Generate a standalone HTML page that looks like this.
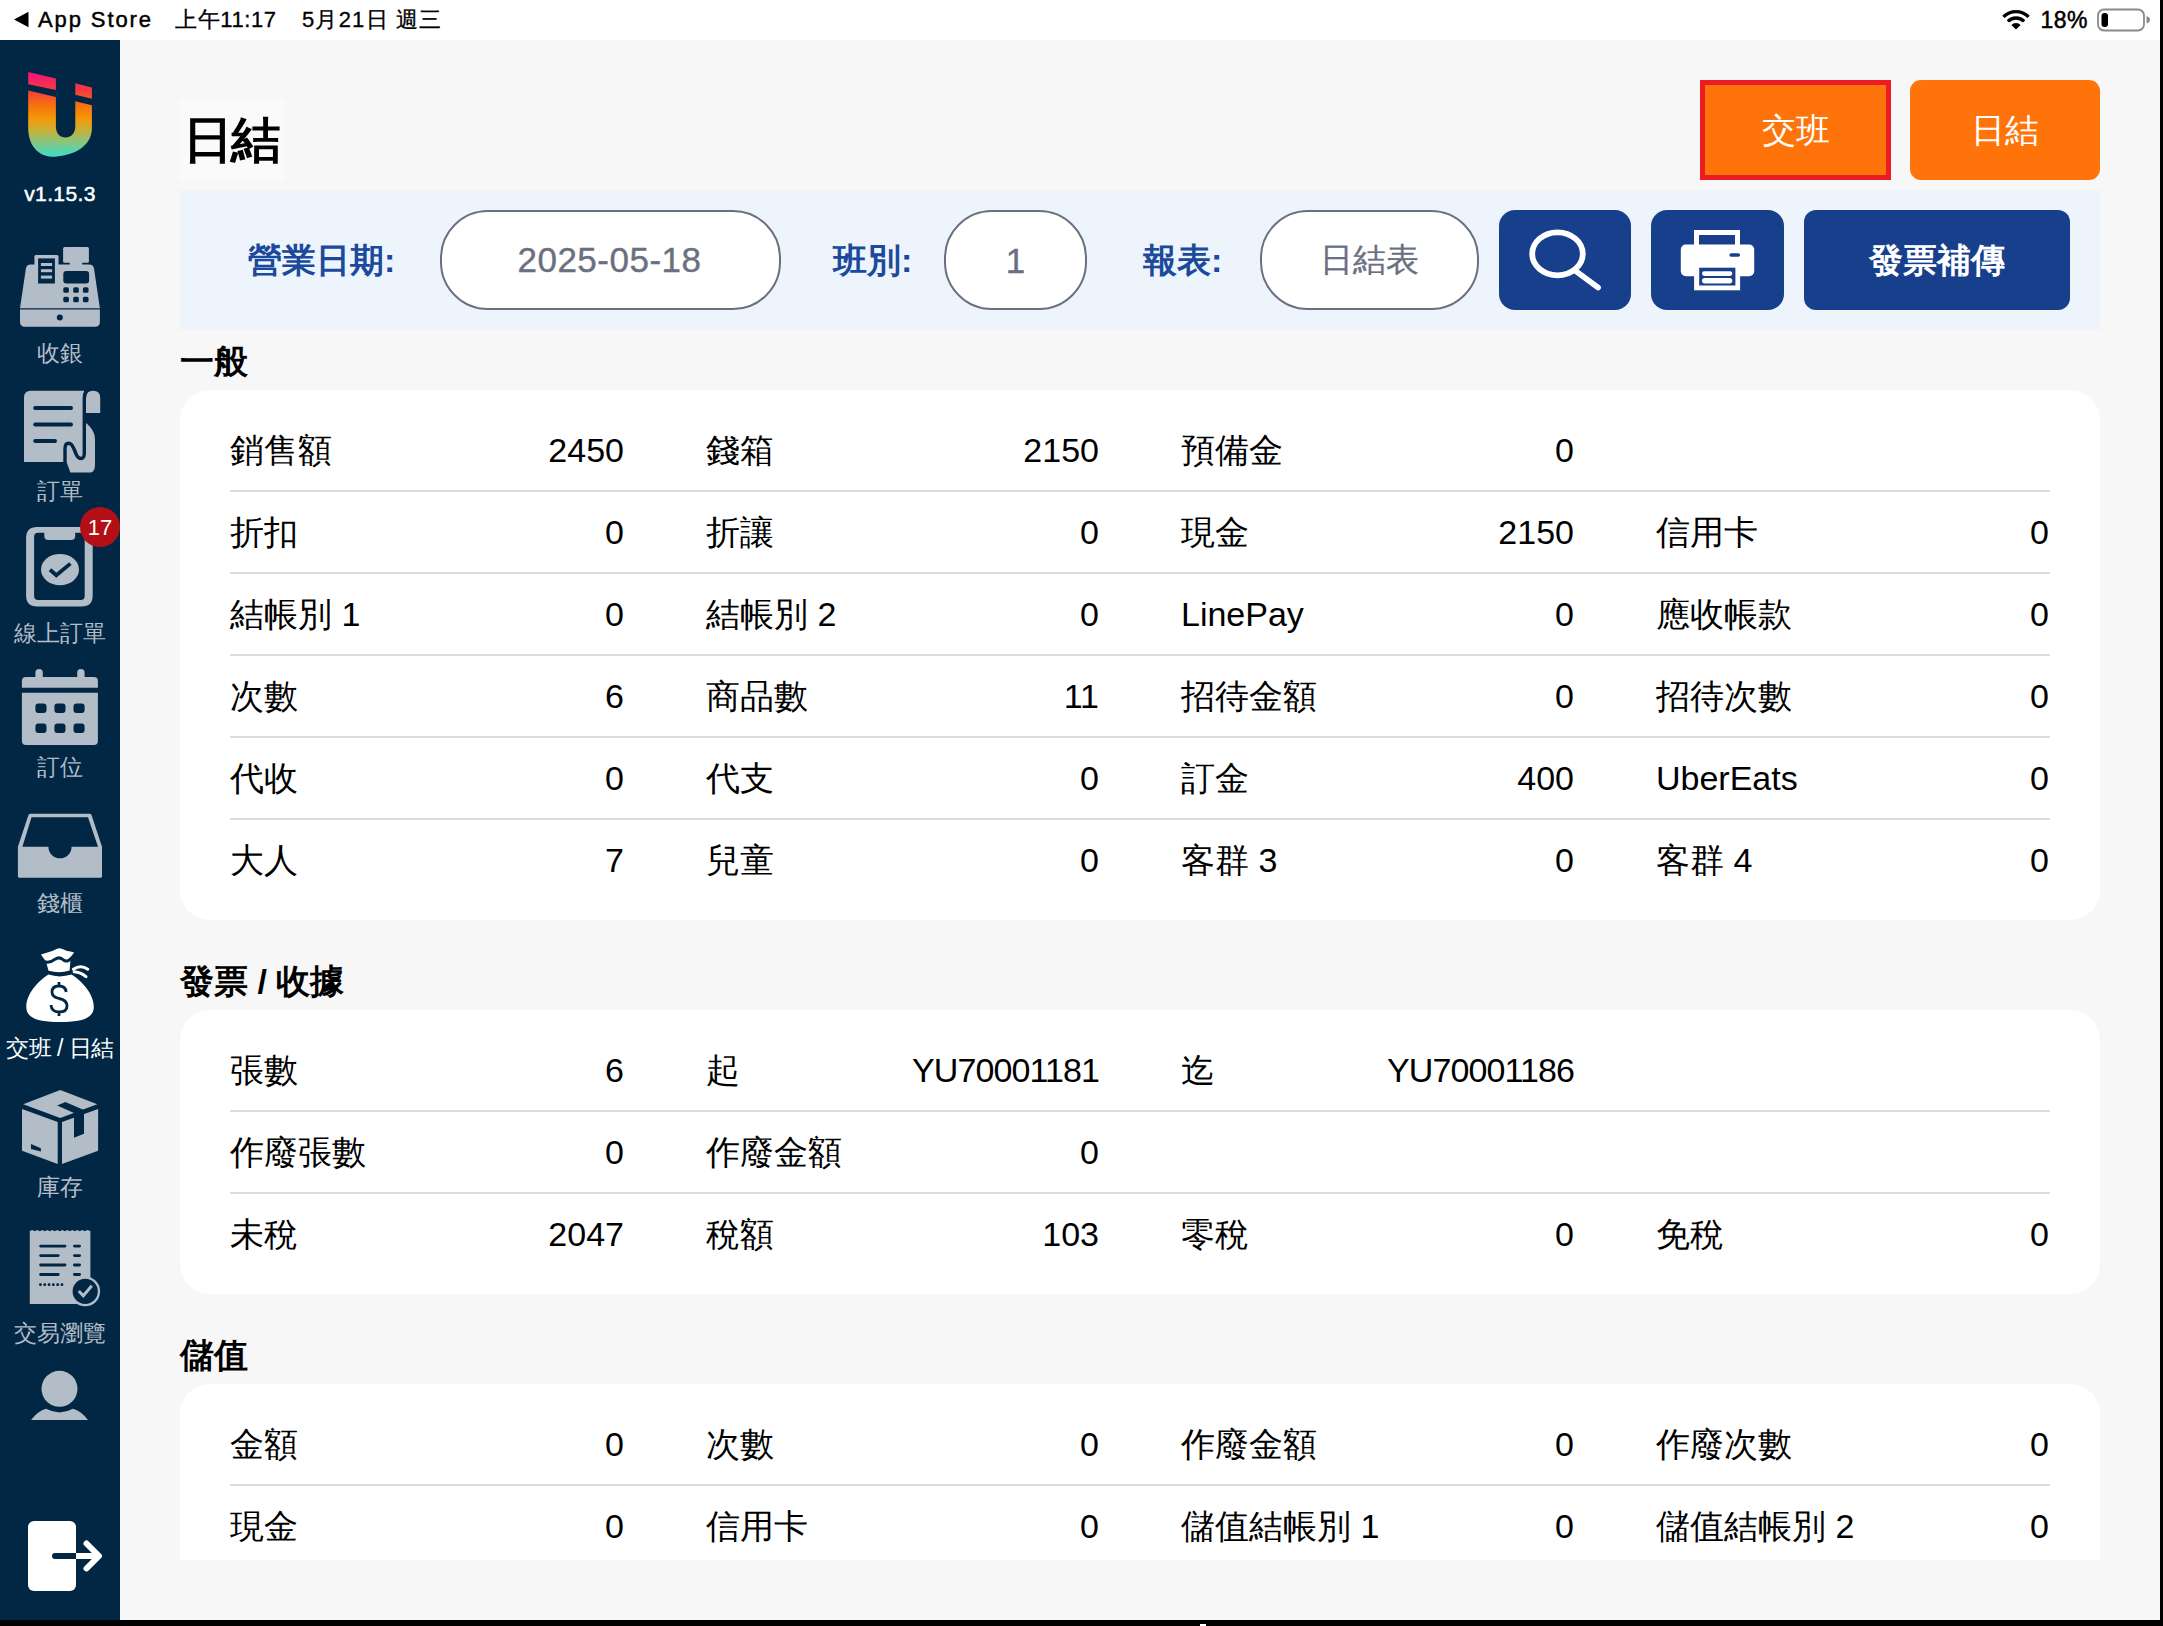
<!DOCTYPE html>
<html><head><meta charset="utf-8"><title>日結</title>
<style>
html,body{margin:0;padding:0;}
body{width:2163px;height:1626px;overflow:hidden;background:#f7f7f7;font-family:"Liberation Sans", sans-serif;position:relative;}
.t{position:absolute;white-space:nowrap;}
.b{position:absolute;box-sizing:border-box;}
svg{position:absolute;}
</style></head><body>

<div class="b" style="left:0px;top:0px;width:2163px;height:40px;background:#ffffff;"></div>
<div class="b" style="left:0px;top:40px;width:120px;height:1580px;background:#012745;"></div>
<div class="b" style="left:2160px;top:0px;width:3px;height:1626px;background:#000;"></div>
<div class="b" style="left:0px;top:1620px;width:2163px;height:6px;background:#000;"></div>
<div class="b" style="left:1200px;top:1624px;width:6px;height:2px;background:#fff;"></div>
<svg style="left:0;top:0" width="40" height="40"><polygon points="14,19.5 28.5,11.7 28.5,27.3" fill="#000"/></svg>
<div class="t" style="left:38px;top:5.0px;font-size:22px;line-height:30px;color:#000;font-weight:normal;letter-spacing:1.9px;-webkit-text-stroke:0.45px #000;">App Store</div>
<div class="t" style="left:175px;top:5.0px;font-size:22px;line-height:30px;color:#000;font-weight:normal;letter-spacing:0.6px;-webkit-text-stroke:0.3px #000;">上午11:17</div>
<div class="t" style="left:302px;top:5.0px;font-size:22px;line-height:30px;color:#000;font-weight:normal;letter-spacing:1.2px;-webkit-text-stroke:0.3px #000;">5月21日 週三</div>
<div class="t" style="right:75px;top:4.0px;font-size:23px;line-height:32px;color:#000;font-weight:normal;letter-spacing:0.5px;-webkit-text-stroke:0.5px #000;">18%</div>
<svg style="left:1995px;top:0" width="168" height="40" viewBox="1995 0 168 40">
<path d="M2016,29.5 L2011.4,24.9 A6.5,6.5 0 0 1 2020.6,24.9 Z" fill="#000"/>
<path d="M2007.9,21.4 A11.5,11.5 0 0 1 2024.1,21.4" stroke="#000" stroke-width="3.4" fill="none"/>
<path d="M2003.4,16.9 A17.8,17.8 0 0 1 2028.6,16.9" stroke="#000" stroke-width="3.4" fill="none"/>
<rect x="2098" y="9.5" width="46" height="21" rx="6" fill="none" stroke="#8a8a8a" stroke-width="1.8"/>
<rect x="2101.5" y="13" width="6.5" height="14" rx="3" fill="#000"/>
<path d="M2146.5,16.2 Q2150,17 2150,19.8 Q2150,22.6 2146.5,23.4 Z" fill="#8a8a8a"/>
</svg>
<div class="b" style="left:180px;top:100px;width:104px;height:80px;background:#fafafa;"></div>
<div class="t" style="left:182.5px;top:105.0px;font-size:50px;line-height:70px;color:#000;font-weight:bold;letter-spacing:-1.5px;">日結</div>
<div class="b" style="left:1700px;top:80px;width:191px;height:100px;background:#ff740a;border:5px solid #ec1c24;"></div>
<div class="t" style="left:1700.0px;width:191px;text-align:center;top:106.5px;font-size:34px;line-height:47px;color:#fff;font-weight:normal;">交班</div>
<div class="b" style="left:1910px;top:80px;width:190px;height:100px;background:#ff740a;border-radius:11px;"></div>
<div class="t" style="left:1910.0px;width:190px;text-align:center;top:106.5px;font-size:34px;line-height:47px;color:#fff;font-weight:normal;">日結</div>
<div class="b" style="left:180px;top:190px;width:1920px;height:140px;background:#edf4fc;"></div>
<div class="t" style="left:248px;top:236.5px;font-size:34px;line-height:47px;color:#1b4a9c;font-weight:bold;">營業日期:</div>
<div class="b" style="left:440px;top:210px;width:341px;height:100px;background:#fff;border:2px solid #6b7080;border-radius:48px;"></div>
<div class="t" style="left:459.5px;width:300px;text-align:center;top:235.0px;font-size:35px;line-height:49px;color:#6b7080;font-weight:normal;letter-spacing:0.5px;-webkit-text-stroke:0.4px #6b7080;">2025-05-18</div>
<div class="t" style="left:833px;top:236.5px;font-size:34px;line-height:47px;color:#1b4a9c;font-weight:bold;">班別:</div>
<div class="b" style="left:944px;top:210px;width:143px;height:100px;background:#fff;border:2px solid #6b7080;border-radius:48px;"></div>
<div class="t" style="left:965.5px;width:100px;text-align:center;top:235.5px;font-size:35px;line-height:49px;color:#6b7080;font-weight:normal;-webkit-text-stroke:0.4px #6b7080;">1</div>
<div class="t" style="left:1143px;top:236.5px;font-size:34px;line-height:47px;color:#1b4a9c;font-weight:bold;">報表:</div>
<div class="b" style="left:1260px;top:210px;width:219px;height:100px;background:#fff;border:2px solid #6b7080;border-radius:48px;"></div>
<div class="t" style="left:1269.5px;width:200px;text-align:center;top:237.0px;font-size:33px;line-height:46px;color:#6b7080;font-weight:normal;-webkit-text-stroke:0.3px #6b7080;">日結表</div>
<div class="b" style="left:1499px;top:210px;width:132px;height:100px;background:#173f8c;border-radius:16px;"></div>
<div class="b" style="left:1651px;top:210px;width:133px;height:100px;background:#173f8c;border-radius:16px;"></div>
<div class="b" style="left:1804px;top:210px;width:266px;height:100px;background:#173f8c;border-radius:12px;"></div>
<div class="t" style="left:1804.0px;width:266px;text-align:center;top:236.5px;font-size:34px;line-height:47px;color:#fff;font-weight:bold;">發票補傳</div>
<svg style="left:1499px;top:210px" width="132" height="100" viewBox="1499 210 132 100">
<ellipse cx="1557.5" cy="253.8" rx="25.3" ry="21.5" fill="none" stroke="#fff" stroke-width="5.8"/>
<line x1="1577" y1="272" x2="1598" y2="287.5" stroke="#fff" stroke-width="5.8" stroke-linecap="round"/>
</svg>
<svg style="left:1651px;top:210px" width="133" height="100" viewBox="1651 210 133 100">
<rect x="1696.5" y="232.5" width="41" height="16" fill="none" stroke="#fff" stroke-width="5"/>
<rect x="1680.8" y="244.6" width="73.4" height="31.6" rx="5" fill="#fff"/>
<rect x="1729.4" y="253.2" width="10.7" height="3.6" rx="1.8" fill="#173f8c"/>
<rect x="1694.1" y="267.7" width="46" height="22.6" fill="#fff"/>
<rect x="1699.2" y="267.7" width="36.2" height="17.8" fill="#173f8c"/>
<rect x="1702" y="271.2" width="30.3" height="4.7" rx="2.35" fill="#fff"/>
<rect x="1702" y="278" width="30.3" height="5.4" rx="2.7" fill="#fff"/>
</svg>
<div class="t" style="left:180px;top:337.5px;font-size:34px;line-height:47px;color:#000;font-weight:bold;">一般</div>
<div class="b" style="left:180px;top:390px;width:1920px;height:530px;background:#fff;border-radius:30px 30px 30px 30px;"></div>
<div class="t" style="left:230px;top:426.5px;font-size:34px;line-height:47px;color:#000;font-weight:normal;">銷售額</div>
<div class="t" style="right:1539px;top:426.5px;font-size:34px;line-height:47px;color:#000;font-weight:normal;">2450</div>
<div class="t" style="left:706px;top:426.5px;font-size:34px;line-height:47px;color:#000;font-weight:normal;">錢箱</div>
<div class="t" style="right:1064px;top:426.5px;font-size:34px;line-height:47px;color:#000;font-weight:normal;">2150</div>
<div class="t" style="left:1181px;top:426.5px;font-size:34px;line-height:47px;color:#000;font-weight:normal;">預備金</div>
<div class="t" style="right:589px;top:426.5px;font-size:34px;line-height:47px;color:#000;font-weight:normal;">0</div>
<div class="b" style="left:230px;top:490px;width:1820px;height:2px;background:#dddddd;"></div>
<div class="t" style="left:230px;top:508.5px;font-size:34px;line-height:47px;color:#000;font-weight:normal;">折扣</div>
<div class="t" style="right:1539px;top:508.5px;font-size:34px;line-height:47px;color:#000;font-weight:normal;">0</div>
<div class="t" style="left:706px;top:508.5px;font-size:34px;line-height:47px;color:#000;font-weight:normal;">折讓</div>
<div class="t" style="right:1064px;top:508.5px;font-size:34px;line-height:47px;color:#000;font-weight:normal;">0</div>
<div class="t" style="left:1181px;top:508.5px;font-size:34px;line-height:47px;color:#000;font-weight:normal;">現金</div>
<div class="t" style="right:589px;top:508.5px;font-size:34px;line-height:47px;color:#000;font-weight:normal;">2150</div>
<div class="t" style="left:1656px;top:508.5px;font-size:34px;line-height:47px;color:#000;font-weight:normal;">信用卡</div>
<div class="t" style="right:114px;top:508.5px;font-size:34px;line-height:47px;color:#000;font-weight:normal;">0</div>
<div class="b" style="left:230px;top:572px;width:1820px;height:2px;background:#dddddd;"></div>
<div class="t" style="left:230px;top:590.5px;font-size:34px;line-height:47px;color:#000;font-weight:normal;">結帳別 1</div>
<div class="t" style="right:1539px;top:590.5px;font-size:34px;line-height:47px;color:#000;font-weight:normal;">0</div>
<div class="t" style="left:706px;top:590.5px;font-size:34px;line-height:47px;color:#000;font-weight:normal;">結帳別 2</div>
<div class="t" style="right:1064px;top:590.5px;font-size:34px;line-height:47px;color:#000;font-weight:normal;">0</div>
<div class="t" style="left:1181px;top:590.5px;font-size:34px;line-height:47px;color:#000;font-weight:normal;">LinePay</div>
<div class="t" style="right:589px;top:590.5px;font-size:34px;line-height:47px;color:#000;font-weight:normal;">0</div>
<div class="t" style="left:1656px;top:590.5px;font-size:34px;line-height:47px;color:#000;font-weight:normal;">應收帳款</div>
<div class="t" style="right:114px;top:590.5px;font-size:34px;line-height:47px;color:#000;font-weight:normal;">0</div>
<div class="b" style="left:230px;top:654px;width:1820px;height:2px;background:#dddddd;"></div>
<div class="t" style="left:230px;top:672.5px;font-size:34px;line-height:47px;color:#000;font-weight:normal;">次數</div>
<div class="t" style="right:1539px;top:672.5px;font-size:34px;line-height:47px;color:#000;font-weight:normal;">6</div>
<div class="t" style="left:706px;top:672.5px;font-size:34px;line-height:47px;color:#000;font-weight:normal;">商品數</div>
<div class="t" style="right:1064px;top:672.5px;font-size:34px;line-height:47px;color:#000;font-weight:normal;">11</div>
<div class="t" style="left:1181px;top:672.5px;font-size:34px;line-height:47px;color:#000;font-weight:normal;">招待金額</div>
<div class="t" style="right:589px;top:672.5px;font-size:34px;line-height:47px;color:#000;font-weight:normal;">0</div>
<div class="t" style="left:1656px;top:672.5px;font-size:34px;line-height:47px;color:#000;font-weight:normal;">招待次數</div>
<div class="t" style="right:114px;top:672.5px;font-size:34px;line-height:47px;color:#000;font-weight:normal;">0</div>
<div class="b" style="left:230px;top:736px;width:1820px;height:2px;background:#dddddd;"></div>
<div class="t" style="left:230px;top:754.5px;font-size:34px;line-height:47px;color:#000;font-weight:normal;">代收</div>
<div class="t" style="right:1539px;top:754.5px;font-size:34px;line-height:47px;color:#000;font-weight:normal;">0</div>
<div class="t" style="left:706px;top:754.5px;font-size:34px;line-height:47px;color:#000;font-weight:normal;">代支</div>
<div class="t" style="right:1064px;top:754.5px;font-size:34px;line-height:47px;color:#000;font-weight:normal;">0</div>
<div class="t" style="left:1181px;top:754.5px;font-size:34px;line-height:47px;color:#000;font-weight:normal;">訂金</div>
<div class="t" style="right:589px;top:754.5px;font-size:34px;line-height:47px;color:#000;font-weight:normal;">400</div>
<div class="t" style="left:1656px;top:754.5px;font-size:34px;line-height:47px;color:#000;font-weight:normal;">UberEats</div>
<div class="t" style="right:114px;top:754.5px;font-size:34px;line-height:47px;color:#000;font-weight:normal;">0</div>
<div class="b" style="left:230px;top:818px;width:1820px;height:2px;background:#dddddd;"></div>
<div class="t" style="left:230px;top:836.5px;font-size:34px;line-height:47px;color:#000;font-weight:normal;">大人</div>
<div class="t" style="right:1539px;top:836.5px;font-size:34px;line-height:47px;color:#000;font-weight:normal;">7</div>
<div class="t" style="left:706px;top:836.5px;font-size:34px;line-height:47px;color:#000;font-weight:normal;">兒童</div>
<div class="t" style="right:1064px;top:836.5px;font-size:34px;line-height:47px;color:#000;font-weight:normal;">0</div>
<div class="t" style="left:1181px;top:836.5px;font-size:34px;line-height:47px;color:#000;font-weight:normal;">客群 3</div>
<div class="t" style="right:589px;top:836.5px;font-size:34px;line-height:47px;color:#000;font-weight:normal;">0</div>
<div class="t" style="left:1656px;top:836.5px;font-size:34px;line-height:47px;color:#000;font-weight:normal;">客群 4</div>
<div class="t" style="right:114px;top:836.5px;font-size:34px;line-height:47px;color:#000;font-weight:normal;">0</div>
<div class="t" style="left:180px;top:957.5px;font-size:34px;line-height:47px;color:#000;font-weight:bold;">發票 / 收據</div>
<div class="b" style="left:180px;top:1010px;width:1920px;height:284px;background:#fff;border-radius:30px 30px 30px 30px;"></div>
<div class="t" style="left:230px;top:1046.5px;font-size:34px;line-height:47px;color:#000;font-weight:normal;">張數</div>
<div class="t" style="right:1539px;top:1046.5px;font-size:34px;line-height:47px;color:#000;font-weight:normal;">6</div>
<div class="t" style="left:706px;top:1046.5px;font-size:34px;line-height:47px;color:#000;font-weight:normal;">起</div>
<div class="t" style="right:1064px;top:1046.5px;font-size:34px;line-height:47px;color:#000;font-weight:normal;letter-spacing:-0.9px;">YU70001181</div>
<div class="t" style="left:1181px;top:1046.5px;font-size:34px;line-height:47px;color:#000;font-weight:normal;">迄</div>
<div class="t" style="right:589px;top:1046.5px;font-size:34px;line-height:47px;color:#000;font-weight:normal;letter-spacing:-0.9px;">YU70001186</div>
<div class="b" style="left:230px;top:1110px;width:1820px;height:2px;background:#dddddd;"></div>
<div class="t" style="left:230px;top:1128.5px;font-size:34px;line-height:47px;color:#000;font-weight:normal;">作廢張數</div>
<div class="t" style="right:1539px;top:1128.5px;font-size:34px;line-height:47px;color:#000;font-weight:normal;">0</div>
<div class="t" style="left:706px;top:1128.5px;font-size:34px;line-height:47px;color:#000;font-weight:normal;">作廢金額</div>
<div class="t" style="right:1064px;top:1128.5px;font-size:34px;line-height:47px;color:#000;font-weight:normal;">0</div>
<div class="b" style="left:230px;top:1192px;width:1820px;height:2px;background:#dddddd;"></div>
<div class="t" style="left:230px;top:1210.5px;font-size:34px;line-height:47px;color:#000;font-weight:normal;">未稅</div>
<div class="t" style="right:1539px;top:1210.5px;font-size:34px;line-height:47px;color:#000;font-weight:normal;">2047</div>
<div class="t" style="left:706px;top:1210.5px;font-size:34px;line-height:47px;color:#000;font-weight:normal;">稅額</div>
<div class="t" style="right:1064px;top:1210.5px;font-size:34px;line-height:47px;color:#000;font-weight:normal;">103</div>
<div class="t" style="left:1181px;top:1210.5px;font-size:34px;line-height:47px;color:#000;font-weight:normal;">零稅</div>
<div class="t" style="right:589px;top:1210.5px;font-size:34px;line-height:47px;color:#000;font-weight:normal;">0</div>
<div class="t" style="left:1656px;top:1210.5px;font-size:34px;line-height:47px;color:#000;font-weight:normal;">免稅</div>
<div class="t" style="right:114px;top:1210.5px;font-size:34px;line-height:47px;color:#000;font-weight:normal;">0</div>
<div class="t" style="left:180px;top:1331.5px;font-size:34px;line-height:47px;color:#000;font-weight:bold;">儲值</div>
<div class="b" style="left:180px;top:1384px;width:1920px;height:176px;background:#fff;border-radius:30px 30px 0 0;"></div>
<div class="t" style="left:230px;top:1420.5px;font-size:34px;line-height:47px;color:#000;font-weight:normal;">金額</div>
<div class="t" style="right:1539px;top:1420.5px;font-size:34px;line-height:47px;color:#000;font-weight:normal;">0</div>
<div class="t" style="left:706px;top:1420.5px;font-size:34px;line-height:47px;color:#000;font-weight:normal;">次數</div>
<div class="t" style="right:1064px;top:1420.5px;font-size:34px;line-height:47px;color:#000;font-weight:normal;">0</div>
<div class="t" style="left:1181px;top:1420.5px;font-size:34px;line-height:47px;color:#000;font-weight:normal;">作廢金額</div>
<div class="t" style="right:589px;top:1420.5px;font-size:34px;line-height:47px;color:#000;font-weight:normal;">0</div>
<div class="t" style="left:1656px;top:1420.5px;font-size:34px;line-height:47px;color:#000;font-weight:normal;">作廢次數</div>
<div class="t" style="right:114px;top:1420.5px;font-size:34px;line-height:47px;color:#000;font-weight:normal;">0</div>
<div class="b" style="left:230px;top:1484px;width:1820px;height:2px;background:#dddddd;"></div>
<div class="t" style="left:230px;top:1502.5px;font-size:34px;line-height:47px;color:#000;font-weight:normal;">現金</div>
<div class="t" style="right:1539px;top:1502.5px;font-size:34px;line-height:47px;color:#000;font-weight:normal;">0</div>
<div class="t" style="left:706px;top:1502.5px;font-size:34px;line-height:47px;color:#000;font-weight:normal;">信用卡</div>
<div class="t" style="right:1064px;top:1502.5px;font-size:34px;line-height:47px;color:#000;font-weight:normal;">0</div>
<div class="t" style="left:1181px;top:1502.5px;font-size:34px;line-height:47px;color:#000;font-weight:normal;">儲值結帳別 1</div>
<div class="t" style="right:589px;top:1502.5px;font-size:34px;line-height:47px;color:#000;font-weight:normal;">0</div>
<div class="t" style="left:1656px;top:1502.5px;font-size:34px;line-height:47px;color:#000;font-weight:normal;">儲值結帳別 2</div>
<div class="t" style="right:114px;top:1502.5px;font-size:34px;line-height:47px;color:#000;font-weight:normal;">0</div>
<svg style="left:0;top:0" width="120" height="1626" viewBox="0 0 120 1626">
<defs>
<linearGradient id="lg" x1="0" y1="72" x2="0" y2="157" gradientUnits="userSpaceOnUse">
<stop offset="0" stop-color="#f8107e"/>
<stop offset="0.22" stop-color="#f43d3c"/>
<stop offset="0.42" stop-color="#f57a08"/>
<stop offset="0.56" stop-color="#f29a0c"/>
<stop offset="0.70" stop-color="#c2b23e"/>
<stop offset="0.84" stop-color="#80c888"/>
<stop offset="1" stop-color="#3ddccb"/>
</linearGradient>
</defs>
<!-- logo -->
<polygon points="28.2,72.1 55.9,78.5 55.9,90 28.2,84.3" fill="url(#lg)"/>
<polygon points="75.3,83.2 91.9,87.4 91.9,98.7 75.3,94.8" fill="url(#lg)"/>
<path d="M28.2,90.4 L55.9,96.9 L55.9,126 C55.9,134 60,137.4 65.6,137.4 C71.5,137.4 75.3,133 75.3,126 L75.3,101.3 L91.9,105.2 L91.9,128 C91.9,146 75,155 55,156.8 C38,157.5 28.2,145 28.2,128 Z" fill="url(#lg)"/>
<!-- cash register -->
<g fill="#b3bdc7">
<rect x="63.1" y="247" width="25.8" height="15.7" rx="1.5"/>
<rect x="69.7" y="261" width="12.5" height="5"/>
<rect x="34.4" y="255" width="24.1" height="12" rx="1.5"/>
<path d="M30.6,264.4 H89.1 Q93.4,264.4 94,268.6 L99.9,308.3 H20 L25.9,268.6 Q26.5,264.4 30.6,264.4 Z"/>
<path d="M20,309.6 H99.9 V321.8 Q99.9,326.8 94.9,326.8 H25 Q20,326.8 20,321.8 Z"/>
</g>
<g fill="#012745">
<rect x="38.1" y="258.4" width="16.8" height="25.1"/>
<rect x="63.3" y="270.9" width="25.8" height="12.6" rx="3"/>
<rect x="63.3" y="287.2" width="5.6" height="5.6" rx="1.5"/><rect x="73.2" y="287.2" width="5.6" height="5.6" rx="1.5"/><rect x="82.9" y="287.2" width="5.6" height="5.6" rx="1.5"/>
<rect x="63.3" y="296.7" width="5.6" height="5.6" rx="1.5"/><rect x="73.2" y="296.7" width="5.6" height="5.6" rx="1.5"/><rect x="82.9" y="296.7" width="5.6" height="5.6" rx="1.5"/>
<circle cx="59.8" cy="317.4" r="3"/>
</g>
<g fill="#b3bdc7">
<rect x="40.9" y="263" width="11.2" height="3"/>
<rect x="40.9" y="269.2" width="11.2" height="3"/>
<rect x="40.9" y="275.6" width="11.2" height="3"/>
</g>
<!-- orders scroll -->
<g fill="#b3bdc7">
<path d="M31,390.8 H84 V462 H24 V397.8 Q24,390.8 31,390.8 Z"/>
<path d="M86,413 V398 Q86,390.8 93.1,390.8 Q100.2,390.8 100.2,398 V413 Z"/>
<path d="M85.5,422.5 C91,427 95,432 95,440 V464 Q95,472.6 90.5,472.6 H70.4 L66.5,462 V447 Z"/>
</g>
<path d="M65,462.5 V448.5 Q65,443.2 68.6,443.2 Q71.8,443.2 74,449 L76.5,455 Q78.3,458.5 81,458.5 Q84.3,458.5 84.3,453 V398 Q84.3,393 87,390.5" fill="none" stroke="#012745" stroke-width="3.4"/>
<g stroke="#012745" stroke-width="4" stroke-linecap="round">
<line x1="35.2" y1="408" x2="71" y2="408"/>
<line x1="35.2" y1="424.6" x2="71" y2="424.6"/>
<line x1="35.2" y1="441" x2="55" y2="441"/>
</g>
<!-- online order phone -->
<path fill-rule="evenodd" fill="#b3bdc7" d="M37.1,527.1 H81.7 Q92.7,527.1 92.7,538.1 V595.5 Q92.7,606.5 81.7,606.5 H37.1 Q26.1,606.5 26.1,595.5 V538.1 Q26.1,527.1 37.1,527.1 Z M38.1,532.7 Q34.1,532.7 34.1,536.7 V596 Q34.1,600 38.1,600 H80.7 Q84.7,600 84.7,596 V536.7 Q84.7,532.7 80.7,532.7 Z"/>
<path d="M44.3,532 H75.2 V536 Q75.2,540 71.2,540 H48.3 Q44.3,540 44.3,536 Z" fill="#b3bdc7"/>
<ellipse cx="60" cy="569.6" rx="19" ry="15.7" fill="#b3bdc7"/>
<polyline points="50,569.8 56.3,575.3 70.4,563.6" fill="none" stroke="#012745" stroke-width="3.8"/>
<!-- calendar -->
<g fill="#b3bdc7">
<rect x="35.4" y="669" width="7.4" height="12" rx="3.7"/>
<rect x="77.2" y="669" width="7.4" height="12" rx="3.7"/>
<path d="M26,677 H93.9 Q97.9,677 97.9,681 V687.7 H21.9 V681 Q21.9,677 26,677 Z"/>
<path d="M21.9,692.7 H97.9 V741 Q97.9,745 93.9,745 H26 Q21.9,745 21.9,741 Z"/>
</g>
<g fill="#012745">
<rect x="35.4" y="703.5" width="11.1" height="9.6" rx="3"/><rect x="54.4" y="703.5" width="11.1" height="9.6" rx="3"/><rect x="73.5" y="703.5" width="11.1" height="9.6" rx="3"/>
<rect x="35.4" y="723.4" width="11.1" height="9.6" rx="3"/><rect x="54.4" y="723.4" width="11.1" height="9.6" rx="3"/><rect x="73.5" y="723.4" width="11.1" height="9.6" rx="3"/>
</g>
<!-- drawer -->
<path d="M30.5,813.8 H90 Q91,813.8 91.5,815 L102,846.7 V876.2 Q102,877.7 100.5,877.7 H19.4 Q17.9,877.7 17.9,876.2 V846.7 L28.5,815 Q29,813.8 30.5,813.8 Z" fill="#b3bdc7"/>
<path d="M31.5,817.3 H88 L98,846.7 H71.6 A11.6,11.6 0 0 1 48.4,846.7 H22.4 Z" fill="#012745"/>
<!-- money bag -->
<g fill="#ffffff">
<path d="M48.5,974.6 Q59.5,978.2 71.5,974.6 C82,981 93.8,994 93.8,1007 C93.8,1019 80,1022 60,1022 C40,1022 26.3,1019 26.3,1007 C26.3,994 38,981 48.5,974.6 Z"/>
<path d="M40.9,954.4 Q48,952.5 53,950.8 Q57,948 60,948.3 Q63,949 66.5,950.8 Q70.5,951.8 74,952.2 L70.6,958.5 L69.6,970.6 Q59.5,973.8 48.5,970.8 L46,961.5 Z"/>
</g>
<path d="M43.2,961.3 Q49.5,963.8 55.2,959.2 Q59.5,956.2 63.5,960 Q67.8,963.5 74.2,955.2" fill="none" stroke="#012745" stroke-width="3"/>
<path d="M73.4,969.2 Q80.5,964.2 87.8,969.2" fill="none" stroke="#fff" stroke-width="3" stroke-linecap="round"/>
<path d="M74.2,971.8 Q80.5,972.2 86,976.7" fill="none" stroke="#fff" stroke-width="3" stroke-linecap="round"/>
<path d="M66.2,992 Q65.5,986 59,986 Q52,986 52,992 Q52,997 59,998.5 Q67,1000 67,1006 Q67,1012 59,1012 Q51.5,1012 51,1005 M59,982 V986 M59,1012 V1016" fill="none" stroke="#012745" stroke-width="2.8"/>
<!-- box -->
<g fill="#b3bdc7">
<polygon points="60.3,1090.1 97.3,1104.3 60.3,1118 23.2,1104.3"/>
<polygon points="22,1109 57.7,1121.9 57.7,1164.1 22,1150.8"/>
<polygon points="62,1121.9 98.1,1109 98.1,1150.8 62,1164.1"/>
</g>
<g fill="#012745">
<polygon points="57.2,1105.6 65.4,1102.1 83.9,1109.9 75.7,1113.7"/>
<polygon points="74,1113.8 84,1109.8 84,1133.8 74,1137.8"/>
<polygon points="31,1143.9 40.9,1148.2 40.9,1151.6 31,1149"/>
</g>
<!-- receipt -->
<path d="M29.8,1231 L32.3,1230 L34.8,1231.3 L37.3,1230 L39.8,1231.3 L42.3,1230 L44.8,1231.3 L47.3,1230 L49.8,1231.3 L52.3,1230 L54.8,1231.3 L57.3,1230 L59.8,1231.3 L62.3,1230 L64.8,1231.3 L67.3,1230 L69.8,1231.3 L72.3,1230 L74.8,1231.3 L77.3,1230 L79.8,1231.3 L82.3,1230 L84.8,1231.3 L87.3,1230 L90.4,1231 V1304 H29.8 Z" fill="#b3bdc7"/>
<g stroke="#012745" stroke-width="2.8" stroke-linecap="round">
<line x1="40.6" y1="1246.1" x2="65" y2="1246.1"/><line x1="40.6" y1="1255.6" x2="58.2" y2="1255.6"/>
<line x1="40.6" y1="1265" x2="65" y2="1265"/><line x1="40.6" y1="1274.5" x2="58.2" y2="1274.5"/>
<line x1="74.4" y1="1246.1" x2="79.6" y2="1246.1"/><line x1="74.4" y1="1255.6" x2="79.6" y2="1255.6"/>
<line x1="74.4" y1="1265" x2="79.6" y2="1265"/><line x1="74.4" y1="1274.5" x2="79.6" y2="1274.5"/>
<line x1="40.4" y1="1284.7" x2="66" y2="1284.7" stroke-dasharray="0.1,4.2"/>
</g>
<circle cx="85.2" cy="1291.4" r="14.9" fill="#b3bdc7"/>
<circle cx="85.2" cy="1291.4" r="12.6" fill="#012745"/>
<polyline points="78.8,1291 83.3,1295.8 91.8,1285.8" fill="none" stroke="#b3bdc7" stroke-width="3"/>
<!-- user -->
<circle cx="59.5" cy="1388.8" r="18" fill="#b3bdc7"/>
<path d="M31.1,1420 Q38,1411 46,1408.8 Q59.5,1416 73,1408.8 Q81,1411 88,1420 Z" fill="#b3bdc7"/>
<!-- logout -->
<rect x="28" y="1521" width="48" height="70" rx="6" fill="#fff"/>
<line x1="55" y1="1556" x2="76" y2="1556" stroke="#012745" stroke-width="6" stroke-linecap="round"/>
<line x1="76" y1="1556" x2="97" y2="1556" stroke="#fff" stroke-width="6"/>
<polyline points="86.5,1543.5 99,1556 86.5,1568.5" fill="none" stroke="#fff" stroke-width="6" stroke-linecap="round" stroke-linejoin="round"/>
</svg>

<div class="t" style="left:0.0px;width:120px;text-align:center;top:179.0px;font-size:21px;line-height:29px;color:#ffffff;font-weight:normal;letter-spacing:0.4px;-webkit-text-stroke:0.5px #fff;">v1.15.3</div>
<div class="t" style="left:0.0px;width:120px;text-align:center;top:336.5px;font-size:23px;line-height:32px;color:#b3bdc7;font-weight:normal;">收銀</div>
<div class="t" style="left:0.0px;width:120px;text-align:center;top:475.0px;font-size:23px;line-height:32px;color:#b3bdc7;font-weight:normal;">訂單</div>
<div class="t" style="left:0.0px;width:120px;text-align:center;top:617.0px;font-size:23px;line-height:32px;color:#b3bdc7;font-weight:normal;">線上訂單</div>
<div class="t" style="left:0.0px;width:120px;text-align:center;top:751.0px;font-size:23px;line-height:32px;color:#b3bdc7;font-weight:normal;">訂位</div>
<div class="t" style="left:0.0px;width:120px;text-align:center;top:886.5px;font-size:23px;line-height:32px;color:#b3bdc7;font-weight:normal;">錢櫃</div>
<div class="t" style="left:0.0px;width:120px;text-align:center;top:1032.0px;font-size:23px;line-height:32px;color:#ffffff;font-weight:normal;letter-spacing:-0.5px;">交班 / 日結</div>
<div class="t" style="left:0.0px;width:120px;text-align:center;top:1171.0px;font-size:23px;line-height:32px;color:#b3bdc7;font-weight:normal;">庫存</div>
<div class="t" style="left:0.0px;width:120px;text-align:center;top:1317.0px;font-size:23px;line-height:32px;color:#b3bdc7;font-weight:normal;">交易瀏覽</div>
<div class="b" style="left:80px;top:507px;width:40px;height:40px;border-radius:20px;background:#b30f16"></div>
<div class="t" style="left:80.0px;width:40px;text-align:center;top:512.5px;font-size:22px;line-height:30px;color:#fff;font-weight:normal;">17</div>
</body></html>
